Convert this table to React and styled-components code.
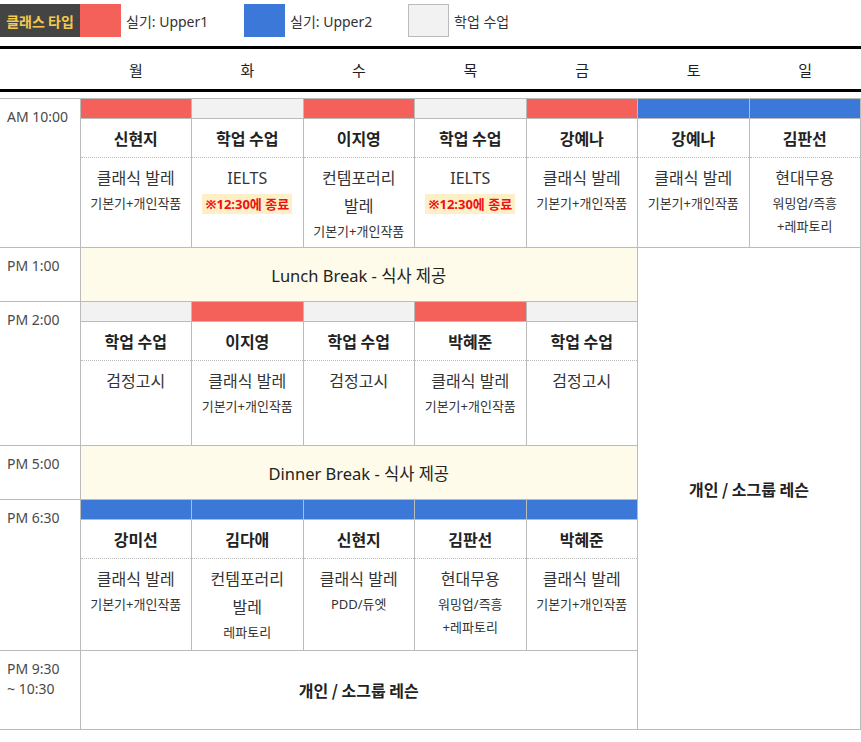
import React from "react";
import styled, { createGlobalStyle } from "styled-components";

const COLORS = {
  red: "#f4605a",
  blue: "#3c78d8",
  gray: "#f2f2f2",
};

const GlobalStyle = createGlobalStyle`
  body {
    margin: 0;
    background: #fff;
    font-family: "Noto Sans", "Noto Sans CJK KR", sans-serif;
    color: #222;
  }
`;

const DAYS = ["월", "화", "수", "목", "금", "토", "일"];

const morning = [
  { type: "red", name: "신현지", desc: ["클래식 발레"], sub: ["기본기+개인작품"] },
  { type: "gray", name: "학업 수업", desc: ["IELTS"], note: "※12:30에 종료" },
  { type: "red", name: "이지영", desc: ["컨템포러리", "발레"], sub: ["기본기+개인작품"] },
  { type: "gray", name: "학업 수업", desc: ["IELTS"], note: "※12:30에 종료" },
  { type: "red", name: "강예나", desc: ["클래식 발레"], sub: ["기본기+개인작품"] },
  { type: "blue", name: "강예나", desc: ["클래식 발레"], sub: ["기본기+개인작품"] },
  { type: "blue", name: "김판선", desc: ["현대무용"], sub: ["워밍업/즉흥", "+레파토리"], last: true },
];

const afternoon = [
  { type: "gray", name: "학업 수업", desc: ["검정고시"] },
  { type: "red", name: "이지영", desc: ["클래식 발레"], sub: ["기본기+개인작품"] },
  { type: "gray", name: "학업 수업", desc: ["검정고시"] },
  { type: "red", name: "박혜준", desc: ["클래식 발레"], sub: ["기본기+개인작품"] },
  { type: "gray", name: "학업 수업", desc: ["검정고시"] },
];

const evening = [
  { type: "blue", name: "강미선", desc: ["클래식 발레"], sub: ["기본기+개인작품"] },
  { type: "blue", name: "김다애", desc: ["컨템포러리", "발레"], sub: ["레파토리"] },
  { type: "blue", name: "신현지", desc: ["클래식 발레"], sub: ["PDD/듀엣"] },
  { type: "blue", name: "김판선", desc: ["현대무용"], sub: ["워밍업/즉흥", "+레파토리"] },
  { type: "blue", name: "박혜준", desc: ["클래식 발레"], sub: ["기본기+개인작품"] },
];

const ClassCell = ({ item }) => (
  <Slot $last={item.last}>
    <Bar $type={item.type} />
    <Name>{item.name}</Name>
    <Content>
      {item.desc.map((d) => (
        <Desc key={d}>{d}</Desc>
      ))}
      {item.sub && item.sub.map((s) => <Sub key={s}>{s}</Sub>)}
      {item.note && <Note>{item.note}</Note>}
    </Content>
  </Slot>
);

const Cols = () => (
  <colgroup>
    <col style={{ width: 80 }} />
    {DAYS.map((d) => (
      <col key={d} />
    ))}
  </colgroup>
);

export default function App() {
  return (
    <Page>
      <GlobalStyle />
      <Legend>
        <LegendTitle>클래스 타입</LegendTitle>
        <Swatch $type="red" />
        <LegendLabel>실기: Upper1</LegendLabel>
        <Swatch $type="blue" />
        <LegendLabel>실기: Upper2</LegendLabel>
        <Swatch $type="gray" $outlined />
        <LegendLabel>학업 수업</LegendLabel>
      </Legend>

      <HeadTable>
        <Cols />
        <tbody>
          <tr>
            <HeadCell />
            {DAYS.map((d) => (
              <HeadCell key={d}>{d}</HeadCell>
            ))}
          </tr>
        </tbody>
      </HeadTable>

      <Grid>
        <Cols />
        <tbody>
          <Row $h={149}>
            <Time>AM 10:00</Time>
            {morning.map((m, i) => (
              <ClassCell key={i} item={m} />
            ))}
          </Row>
          <Row $h={54}>
            <Time>PM 1:00</Time>
            <Break colSpan={5}>Lunch Break - 식사 제공</Break>
            <Lesson colSpan={2} rowSpan={5} $last>
              개인 / 소그룹 레슨
            </Lesson>
          </Row>
          <Row $h={144}>
            <Time>PM 2:00</Time>
            {afternoon.map((m, i) => (
              <ClassCell key={i} item={m} />
            ))}
          </Row>
          <Row $h={54}>
            <Time>PM 5:00</Time>
            <Break colSpan={5}>Dinner Break - 식사 제공</Break>
          </Row>
          <Row $h={151}>
            <Time>PM 6:30</Time>
            {evening.map((m, i) => (
              <ClassCell key={i} item={m} />
            ))}
          </Row>
          <Row $h={79}>
            <Time>
              PM 9:30
              <br />~ 10:30
            </Time>
            <Lesson colSpan={5}>개인 / 소그룹 레슨</Lesson>
          </Row>
        </tbody>
      </Grid>
    </Page>
  );
}

const Page = styled.div`
  width: 861px;
  padding-top: 4px;
`;

const Legend = styled.div`
  display: flex;
  align-items: stretch;
  height: 33px;
`;

const LegendTitle = styled.div`
  width: 80px;
  background: #444;
  color: #f6c94a;
  font-family: "Noto Sans CJK KR", sans-serif;
  font-weight: bold;
  font-size: 14px;
  display: flex;
  align-items: center;
  justify-content: center;
`;

const Swatch = styled.div`
  width: 41px;
  box-sizing: border-box;
  background: ${(p) => COLORS[p.$type]};
  border: ${(p) => (p.$outlined ? "1px solid #bbb" : "none")};
`;

const LegendLabel = styled.div`
  width: 123px;
  padding-left: 5px;
  box-sizing: border-box;
  font-size: 14px;
  color: #333;
  display: flex;
  align-items: center;
`;

const HeadTable = styled.table`
  width: 100%;
  margin-top: 9px;
  border-collapse: collapse;
  table-layout: fixed;
  border-top: 3px solid #000;
  border-bottom: 3px solid #000;
`;

const HeadCell = styled.td`
  height: 40px;
  padding: 0;
  text-align: center;
  font-size: 15px;
  color: #222;
`;

const Grid = styled.table`
  width: 100%;
  margin-top: 6px;
  border-collapse: collapse;
  table-layout: fixed;
`;

const Row = styled.tr`
  height: ${(p) => p.$h}px;
`;

const Cell = styled.td`
  border: 1px solid #bbb;
  padding: 0;
  ${(p) => (p.$last ? "border-right: 1px solid #bbb;" : "")}
`;

const Time = styled(Cell)`
  border-left: none;
  vertical-align: top;
  padding: 8px 0 0 7px;
  font-size: 14px;
  line-height: 20px;
  color: #4a4a4a;
`;

const Slot = styled(Cell)`
  vertical-align: top;
  text-align: center;
`;

const Bar = styled.div`
  height: 19px;
  background: ${(p) => COLORS[p.$type]};
  border-bottom: 1px solid #bbb;
`;

const Name = styled.div`
  height: 38px;
  line-height: 38px;
  font-family: "Noto Sans CJK KR", sans-serif;
  font-weight: bold;
  font-size: 16px;
  color: #222;
  border-bottom: 1px dotted #bbb;
`;

const Content = styled.div`
  padding: 6px 2px 4px;
  display: flex;
  flex-direction: column;
  align-items: center;
`;

const Desc = styled.div`
  font-size: 16px;
  line-height: 28px;
  color: #333;
`;

const Sub = styled.div`
  font-size: 13px;
  line-height: 23px;
  color: #333;
`;

const Note = styled.div`
  margin-top: 2px;
  padding: 0 3px;
  background: #fdefc6;
  color: #ee1111;
  font-weight: bold;
  font-size: 13px;
  line-height: 20px;
`;

const Break = styled(Cell)`
  background: #fffbea;
  text-align: center;
  vertical-align: middle;
  font-size: 16.5px;
  color: #222;
`;

const Lesson = styled(Cell)`
  text-align: center;
  vertical-align: middle;
  font-family: "Noto Sans CJK KR", sans-serif;
  font-weight: bold;
  font-size: 16px;
  color: #222;
`;
